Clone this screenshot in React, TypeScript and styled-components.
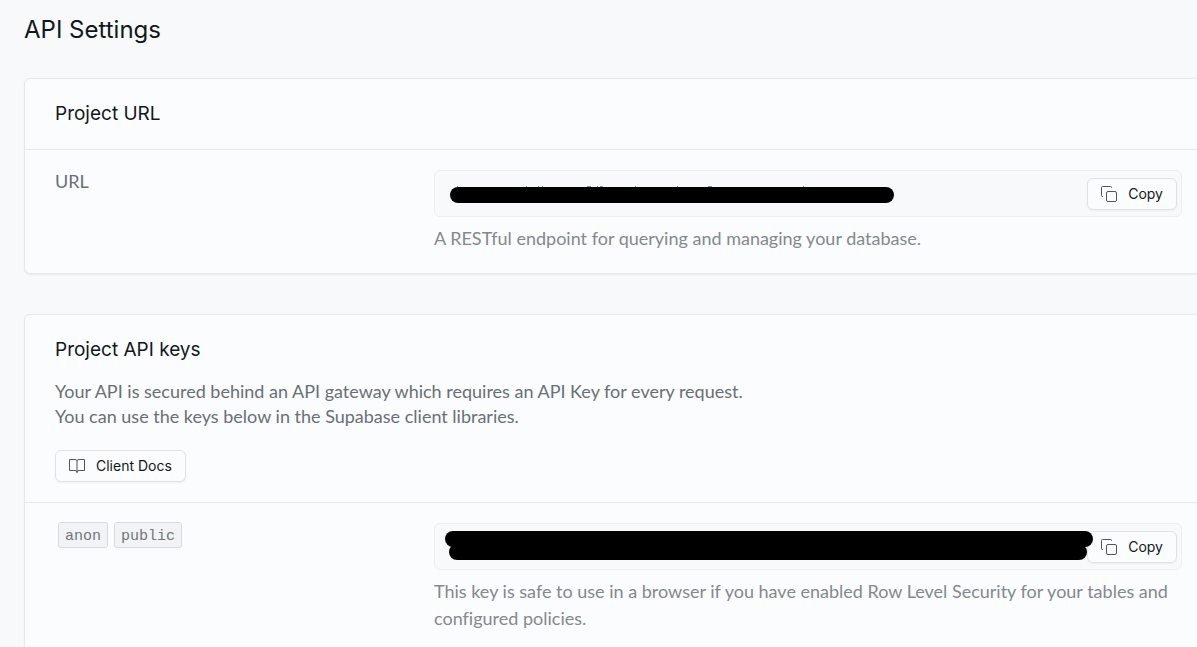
import React from "react";
import styled, { createGlobalStyle } from "styled-components";

const GlobalStyle = createGlobalStyle`
  * { box-sizing: border-box; }
  body {
    margin: 0;
    background: #f8f9fa;
    color: #11181c;
    font-family: Lato, "Liberation Sans", sans-serif;
    font-size: 18px;
    font-variant-ligatures: none;
  }
`;

const Page = styled.main`
  display: flex;
  flex-direction: column;
  gap: 40px;
  min-height: 100vh;
  padding: 14px 0 0 24px;
  overflow-x: clip;
`;

const PageTitle = styled.h1`
  margin: 0 0 -8px;
  font: 400 24px/32px Inter, "Liberation Sans", sans-serif;
`;

const Panel = styled.section`
  margin-right: -16px;
  border: 1px solid #e6e8eb;
  border-radius: 6px;
  background: #fbfcfd;
  box-shadow: 0 1px 2px rgba(0, 0, 0, 0.06);
`;

const PanelHeader = styled.header`
  display: flex;
  flex-direction: column;
  align-items: flex-start;
  padding: 20px 30px;
  border-bottom: 1px solid #e6e8eb;
`;

const PanelTitle = styled.h2`
  margin: 0;
  font: 400 19px/30px Inter, "Liberation Sans", sans-serif;
`;

const Intro = styled.p`
  margin: 14px 0 21px;
  line-height: 25px;
  color: #687076;
`;

const Row = styled.div`
  display: grid;
  grid-template-columns: 1fr 2fr;
  column-gap: 5px;
  padding: 20px 30px 21px;
`;

const RowLabel = styled.label`
  display: block;
  line-height: 22px;
  color: #687076;
`;

const Tags = styled.span`
  display: flex;
  gap: 6px;
  padding: 0 3px;
  margin-top: -1px;
`;

const Tag = styled.code`
  height: 26px;
  padding: 2px 6px 0;
  border: 1px solid #d7dbdf;
  border-radius: 3px;
  background: #f1f3f5;
  color: #70777c;
  font: 15px/24px "Liberation Mono", monospace;
`;

const Field = styled.div`
  position: relative;
  display: flex;
  align-items: center;
  height: 47px;
  padding-right: 4px;
  border: 1px solid #eceef0;
  border-radius: 6px;
  background: #f8f9fa;
`;

const KeyInput = styled.input`
  flex: 1;
  min-width: 0;
  height: 100%;
  padding: 0 16px;
  border: 0;
  outline: 0;
  background: transparent;
  color: #687076;
  font: inherit;
`;

const Button = styled.button`
  display: inline-flex;
  align-items: center;
  gap: 10px;
  height: 32px;
  padding: 0 13px 0 12px;
  border: 1px solid #dfe3e6;
  border-radius: 6px;
  background: #fbfcfd;
  box-shadow: 0 1px 2px rgba(0, 0, 0, 0.05);
  color: #11181c;
  font: 400 14px/20px Inter, "Liberation Sans", sans-serif;
  cursor: pointer;

  svg { flex: none; }
`;

const Help = styled.p`
  margin: 8px 0 0;
  line-height: 27px;
  color: #83898e;
`;

const Redaction = styled.svg`
  position: absolute;
  top: 0;
  left: 0;
  pointer-events: none;
`;

const CopyIcon = () => (
  <svg width="18" height="18" viewBox="0 0 18 18" fill="none" stroke="#50565a" aria-hidden="true">
    <rect x="6.5" y="6.5" width="10" height="10" rx="1.5" />
    <path d="M3 11.5h-.5a1 1 0 0 1-1-1v-8a1 1 0 0 1 1-1h8a1 1 0 0 1 1 1v.5" />
  </svg>
);

const BookIcon = () => (
  <svg width="18" height="18" viewBox="0 0 18 18" fill="none" stroke="#50565a" aria-hidden="true">
    <path d="M9 4a2 2 0 0 0-2-1.500H1.500v11H7a2 2 0 0 1 2 2V4a2 2 0 0 1 2-1.500h5.500v11H11a2 2 0 0 0-2 2" />
  </svg>
);

const CopyButton = () => (
  <Button type="button"><CopyIcon />Copy</Button>
);

export default function App() {
  return (
    <>
      <GlobalStyle />
      <Page>
        <PageTitle>API Settings</PageTitle>

        <Panel>
          <PanelHeader>
            <PanelTitle>Project URL</PanelTitle>
          </PanelHeader>
          <Row>
            <RowLabel htmlFor="project-url">URL</RowLabel>
            <div>
              <Field>
                <KeyInput id="project-url" readOnly />
                <CopyButton />
                <Redaction width="470" height="45" aria-hidden="true">
                  <path
                    d="M22 15.500h1M91 15.500h1M103 15.500h1M107 15.500h1M152 15.500h4M162 15.500h1M165 15.500h3M200 15.500h1M242 15.500h1M273 15.500h4M368 15.500h1"
                    stroke="#8b9094"
                  />
                  <rect x="15" y="16" width="444" height="16" rx="8" />
                </Redaction>
              </Field>
              <Help>A RESTful endpoint for querying and managing your database.</Help>
            </div>
          </Row>
        </Panel>

        <Panel>
          <PanelHeader>
            <PanelTitle>Project API keys</PanelTitle>
            <Intro>
              Your API is secured behind an API gateway which requires an API Key for every request.
              <br />
              You can use the keys below in the Supabase client libraries.
            </Intro>
            <Button type="button"><BookIcon />Client Docs</Button>
          </PanelHeader>
          <Row>
            <RowLabel htmlFor="anon-key">
              <Tags>
                <Tag>anon</Tag>
                <Tag>public</Tag>
              </Tags>
            </RowLabel>
            <div>
              <Field>
                <KeyInput id="anon-key" readOnly />
                <CopyButton />
                <Redaction width="670" height="45" aria-hidden="true">
                  <rect x="10" y="7" width="648" height="16" rx="8" />
                  <rect x="14" y="20" width="638" height="16" rx="8" />
                </Redaction>
              </Field>
              <Help>
                This key is safe to use in a browser if you have enabled Row Level Security for your tables and
                configured policies.
              </Help>
            </div>
          </Row>
        </Panel>
      </Page>
    </>
  );
}
